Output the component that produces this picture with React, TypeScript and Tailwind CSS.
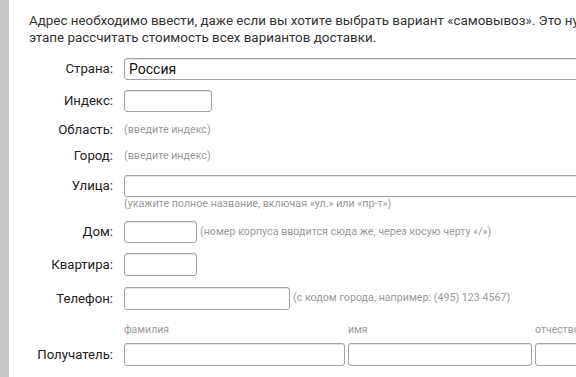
import React from 'react';

const inputCls =
  'h-[22px] border border-[#a3a3a3] rounded-[3px] bg-white shadow-[inset_0_1px_1px_rgba(0,0,0,0.12)] px-1 outline-none text-[14px] text-[#111]';

function Label({ children }: { children: React.ReactNode }) {
  return <div className="w-[104px] shrink-0 text-right text-[13.2px] text-[#222]">{children}</div>;
}

export default function App() {
  return (
    <div className="flex w-[576px] h-[377px] overflow-hidden bg-white" style={{ fontFamily: 'Roboto, "Noto Sans", sans-serif' }}>
      <div className="w-[9px] shrink-0 bg-[#c9c9c9]" />
      <div className="flex-1 min-w-0 overflow-hidden">
        {/* Intro */}
        <p className="mt-[12px] pl-[20px] text-[13.4px] leading-[17px] text-[#333] whitespace-nowrap">
          Адрес необходимо ввести, даже если вы хотите выбрать вариант «самовывоз». Это нужно
          <br />
          этапе рассчитать стоимость всех вариантов доставки.
        </p>

        {/* Country */}
        <div className="flex items-center gap-[11px] mt-[12px]">
          <Label>Страна:</Label>
          <input className={`${inputCls} w-[520px] shrink-0`} defaultValue="Россия" />
        </div>

        {/* Index */}
        <div className="flex items-center gap-[11px] mt-[10px]">
          <Label>Индекс:</Label>
          <input className={`${inputCls} w-[88px]`} />
        </div>

        {/* Region */}
        <div className="flex items-center gap-[11px] mt-[8px] h-[20px]">
          <Label>Область:</Label>
          <span className="text-[10.7px] text-[#9a9a9a]">(введите индекс)</span>
        </div>

        {/* City */}
        <div className="flex items-center gap-[11px] mt-[6px] h-[20px]">
          <Label>Город:</Label>
          <span className="text-[10.7px] text-[#9a9a9a]">(введите индекс)</span>
        </div>

        {/* Street */}
        <div className="flex items-center gap-[11px] mt-[9px]">
          <Label>Улица:</Label>
          <input className={`${inputCls} w-[520px] shrink-0`} />
        </div>
        <div className="pl-[115px] text-[10.7px] leading-[14px] text-[#9a9a9a]">
          (укажите полное название, включая «ул.» или «пр-т»)
        </div>

        {/* House */}
        <div className="flex items-center gap-[11px] mt-[10px]">
          <Label>Дом:</Label>
          <input className={`${inputCls} w-[73px]`} />
          <span className="-ml-[8px] text-[10.7px] text-[#9a9a9a]">(номер корпуса вводится сюда же, через косую черту «/»)</span>
        </div>

        {/* Flat */}
        <div className="flex items-center gap-[11px] mt-[10px]">
          <Label>Квартира:</Label>
          <input className={`${inputCls} w-[73px] h-[23px]`} />
        </div>

        {/* Phone */}
        <div className="flex items-center gap-[11px] mt-[11px]">
          <Label>Телефон:</Label>
          <input className={`${inputCls} w-[166px] h-[23px]`} />
          <span className="-ml-[8px] text-[10.7px] text-[#9a9a9a]">(с кодом города, например: (495) 123 4567)</span>
        </div>

        {/* Recipient captions */}
        <div className="flex gap-[11px] mt-[14px] h-[12px] items-center">
          <div className="w-[104px] shrink-0" />
          <div className="flex gap-[3px] text-[10.5px] text-[#9a9a9a]">
            <span className="w-[221px] shrink-0">фамилия</span>
            <span className="w-[184px] shrink-0">имя</span>
            <span className="w-[120px] shrink-0">отчество</span>
          </div>
        </div>

        {/* Recipient */}
        <div className="flex items-center gap-[11px] mt-[7px]">
          <Label>Получатель:</Label>
          <div className="flex gap-[3px]">
            <input className={`${inputCls} w-[221px] h-[23px] shrink-0`} />
            <input className={`${inputCls} w-[184px] h-[23px] shrink-0`} />
            <input className={`${inputCls} w-[120px] h-[23px] shrink-0`} />
          </div>
        </div>
      </div>
    </div>
  );
}
